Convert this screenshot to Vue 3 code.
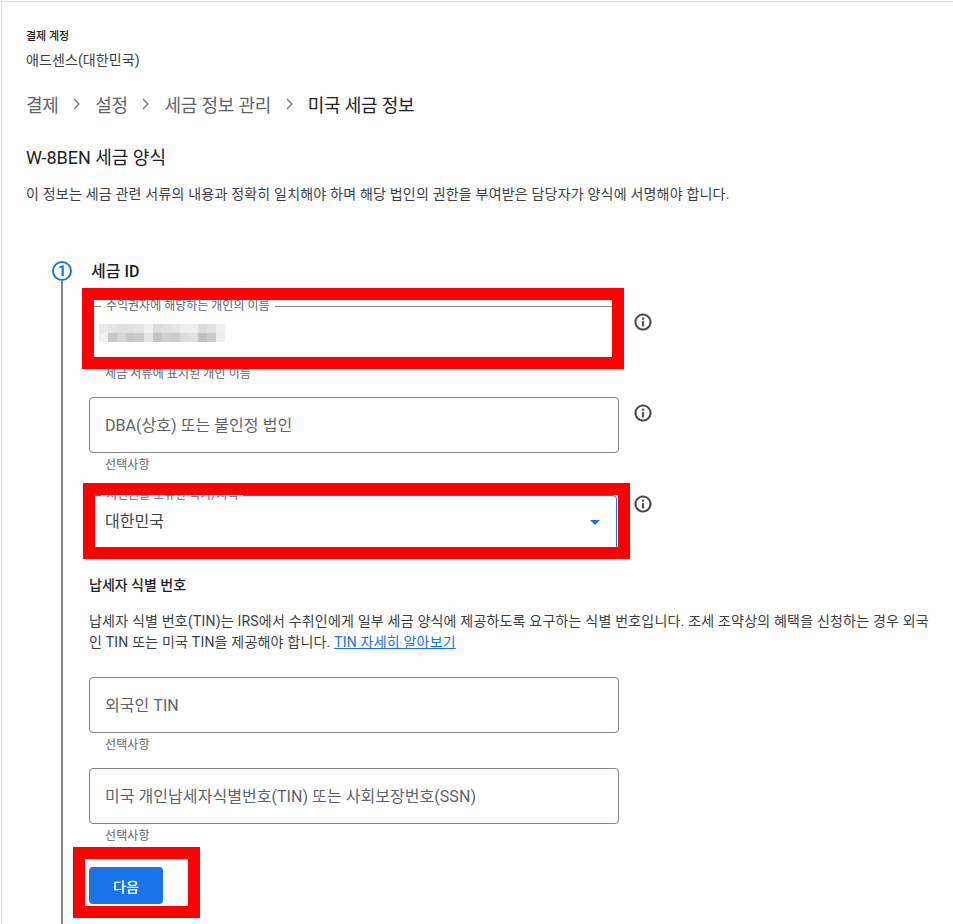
<script setup>
const crumbs = ["결제", "설정", "세금 정보 관리"];

// pixelated name, cell shades left to right
const topShades = ["e9", "e4", "e0", "e2", "e6", "f0", "dc", "e0", "e4", "ee", "ee", "dc", "e2", "f0"];
const bottomShades = ["f2", "c8", "d6", "c8", "cc", "e4", "c4", "d0", "cc", "dc", "e0", "c0", "cc", "ee"];
const cells = [...topShades, ...bottomShades];

const infoPath =
  "M11 7h2v2h-2zm0 4h2v6h-2zm1-9C6.48 2 2 6.48 2 12s4.48 10 10 10 10-4.48 10-10S17.52 2 12 2zm0 18c-4.41 0-8-3.59-8-8s3.59-8 8-8 8 3.59 8 8-3.59 8-8 8z";
</script>

<template>
  <div class="page">
    <div class="account-label">결제 계정</div>
    <div class="account-name">애드센스(대한민국)</div>

    <nav class="breadcrumb">
      <template v-for="crumb in crumbs" :key="crumb">
        <span class="crumb">{{ crumb }}</span>
        <svg class="chevron" width="10" height="14" viewBox="0 0 10 14">
          <path d="M2 2l5 5-5 5" fill="none" stroke="#70757a" stroke-width="1.3" />
        </svg>
      </template>
      <span class="crumb current">미국 세금 정보</span>
    </nav>

    <h1 class="form-title">W-8BEN 세금 양식</h1>
    <p class="form-desc">
      이 정보는 세금 관련 서류의 내용과 정확히 일치해야 하며 해당 법인의 권한을 부여받은 담당자가 양식에 서명해야 합니다.
    </p>

    <section class="step">
      <div class="rail">
        <div class="step-num">1</div>
        <div class="rail-line"></div>
      </div>

      <div class="step-body">
        <h2 class="step-title">세금 ID</h2>

        <div class="row first-row">
          <div class="field-wrap">
            <div class="field filled">
              <span class="float-label">수익권자에 해당하는 개인의 이름</span>
              <div class="blur-name">
                <i v-for="(shade, i) in cells" :key="i" :style="{ background: '#' + shade + shade + shade }"></i>
              </div>
            </div>
            <div class="hint">세금 서류에 표시된 개인 이름</div>
          </div>
          <svg class="info" width="20" height="20" viewBox="0 0 24 24"><path :d="infoPath" /></svg>
          <div class="redact redact-name"></div>
        </div>

        <div class="row">
          <div class="field-wrap">
            <div class="field"><span class="placeholder">DBA(상호) 또는 불인정 법인</span></div>
            <div class="hint">선택사항</div>
          </div>
          <svg class="info" width="20" height="20" viewBox="0 0 24 24"><path :d="infoPath" /></svg>
        </div>

        <div class="row select-row">
          <div class="field-wrap">
            <div class="field select">
              <span class="float-label blue">시민권을 보유한 국가/지역</span>
              <span class="value">대한민국</span>
              <span class="arrow"></span>
            </div>
          </div>
          <svg class="info" width="20" height="20" viewBox="0 0 24 24"><path :d="infoPath" /></svg>
          <div class="redact redact-country"></div>
        </div>

        <h3 class="tin-title">납세자 식별 번호</h3>
        <p class="tin-desc">
          납세자 식별 번호(TIN)는 IRS에서 수취인에게 일부 세금 양식에 제공하도록 요구하는 식별 번호입니다. 조세 조약상의 혜택을 신청하는 경우 외국인 TIN 또는 미국 TIN을 제공해야 합니다.
          <a class="link">TIN 자세히 알아보기</a>
        </p>

        <div class="row tin-row">
          <div class="field-wrap">
            <div class="field"><span class="placeholder">외국인 TIN</span></div>
            <div class="hint">선택사항</div>
          </div>
        </div>

        <div class="row">
          <div class="field-wrap">
            <div class="field"><span class="placeholder">미국 개인납세자식별번호(TIN) 또는 사회보장번호(SSN)</span></div>
            <div class="hint">선택사항</div>
          </div>
        </div>

        <div class="actions">
          <button class="next-btn" type="button">다음</button>
          <div class="redact redact-next"></div>
        </div>
      </div>
    </section>
  </div>
</template>

<style>
html, body {
  margin: 0;
  background: #fff;
  overflow: hidden;
}
</style>

<style scoped>
.page {
  box-sizing: border-box;
  height: 923px;
  margin: 1px 0 0 1px;
  padding: 28px 0 0 24px;
  border-top: 1px solid #dadce0;
  border-left: 1px solid #dadce0;
  overflow: hidden;
  font-family: Roboto, "Noto Sans CJK KR", sans-serif;
  color: #202124;
}
.account-label {
  font-size: 11px;
  font-weight: 500;
  line-height: 14px;
}
.account-name {
  margin-top: 6px;
  font-size: 14px;
  letter-spacing: 0.1px;
  line-height: 20px;
  color: #3c4043;
}
.breadcrumb {
  display: flex;
  align-items: center;
  margin-top: 21px;
  height: 26px;
  font-size: 18px;
  letter-spacing: -0.2px;
  color: #5f6368;
}
.crumb {
  white-space: nowrap;
}
.current {
  color: #202124;
}
.chevron {
  margin: 0 13px 0 13.5px;
}
.form-title {
  margin: 28px 0 0;
  font-size: 18px;
  font-weight: 400;
  line-height: 26px;
}
.form-desc {
  margin: 13px 0 0;
  font-size: 14px;
  letter-spacing: 0.2px;
  line-height: 20px;
  color: #3c4043;
  white-space: nowrap;
}
.step {
  display: flex;
  margin-top: 57px;
}
.rail {
  display: flex;
  flex-direction: column;
  align-items: center;
  flex: none;
  width: 20px;
  margin-left: 26px;
}
.step-num {
  box-sizing: border-box;
  width: 20px;
  height: 20px;
  border: 2px solid #1a73e8;
  border-radius: 50%;
  text-align: center;
  font-size: 15px;
  font-weight: 700;
  line-height: 16px;
  color: #1a73e8;
}
.rail-line {
  width: 2px;
  height: 700px;
  background: #80868b;
}
.step-body {
  flex: none;
  width: 842px;
  margin-left: 17px;
}
.step-title {
  margin: 1px 0 0 2px;
  font-size: 16px;
  font-weight: 500;
  line-height: 20px;
}
.row {
  position: relative;
  display: flex;
  align-items: flex-start;
}
.first-row {
  margin-top: 24px;
}
.field-wrap {
  width: 530px;
  height: 91px;
}
.field {
  position: relative;
  box-sizing: border-box;
  display: flex;
  align-items: center;
  height: 56px;
  padding: 0 15px 2px;
  border: 1px solid #80868b;
  border-radius: 4px;
}
.placeholder {
  font-size: 16px;
  letter-spacing: 0.05px;
  color: #5f6368;
}
.float-label {
  position: absolute;
  top: -8px;
  left: 11px;
  padding: 0 5px;
  background: #fff;
  font-size: 12px;
  line-height: 14px;
  color: #5f6368;
}
.float-label.blue {
  color: #1a73e8;
}
.blur-name {
  display: grid;
  grid-template-columns: repeat(14, 9px);
  grid-auto-rows: 9px;
  margin: -1px 0 0 -6px;
}
.hint {
  margin: 5px 0 0 16px;
  font-size: 12px;
  letter-spacing: 0.1px;
  line-height: 14px;
  color: #5f6368;
}
.filled + .hint {
  margin-top: 5px;
}
.info {
  flex: none;
  margin: 6px 0 0 14px;
  fill: #3c4043;
  stroke: #3c4043;
  stroke-width: 0.4;
}
.select-row {
  margin-top: 7px;
}
.select-row .info {
  margin-top: -1px;
}
.select {
  width: 528px;
  padding-bottom: 7px;
  border: 1px solid #1a73e8;
}
.value {
  font-size: 16px;
  color: #3c4043;
}
.arrow {
  position: absolute;
  top: 24px;
  right: 16px;
  border-left: 5px solid transparent;
  border-right: 5px solid transparent;
  border-top: 5px solid #1a73e8;
}
.select-row .field-wrap {
  height: 80px;
}
.tin-title {
  margin: 0;
  font-size: 14px;
  font-weight: 500;
  line-height: 20px;
}
.tin-desc {
  width: 842px;
  margin: 16px 0 0;
  font-size: 14px;
  letter-spacing: 0.2px;
  line-height: 21px;
  color: #3c4043;
}
.link {
  color: #1a73e8;
  text-decoration: underline;
}
.tin-row {
  margin-top: 24px;
}
.actions {
  position: relative;
  margin-top: -48px;
  padding-top: 56px;
}
.next-btn {
  display: block;
  width: 74px;
  height: 37px;
  padding: 0;
  border: 0;
  border-radius: 4px;
  background: #1a73e8;
  color: #fff;
  font-family: inherit;
  font-size: 14px;
  font-weight: 500;
}
/* red redaction boxes drawn over the screenshot */
.redact {
  position: absolute;
  box-sizing: border-box;
  border: 12px solid #ff0000;
  pointer-events: none;
}
.redact-name {
  left: -7px;
  top: -18px;
  width: 542px;
  height: 81px;
}
.redact-country {
  left: -6px;
  top: -12px;
  width: 547px;
  height: 76px;
}
.redact-next {
  left: -16px;
  bottom: -14px;
  width: 127px;
  height: 71px;
}
</style>
